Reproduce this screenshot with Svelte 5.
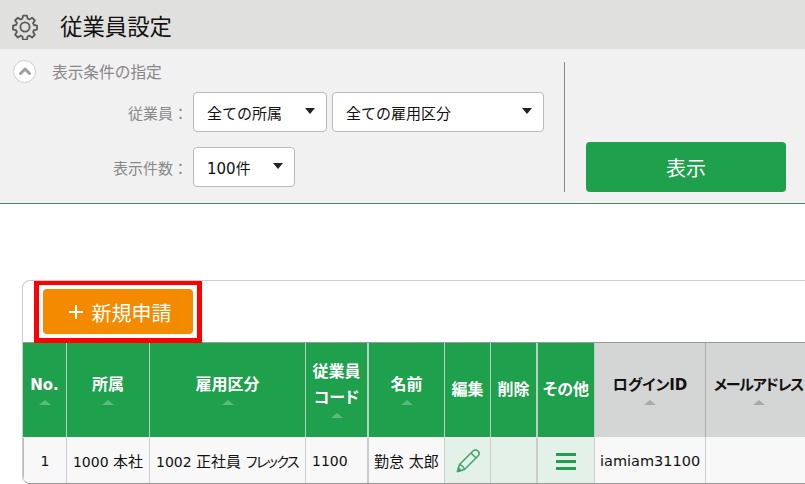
<script>
  const heads = [
    { label: 'No.', w: 44, sort: true },
    { label: '所属', w: 83, sort: true },
    { label: '雇用区分', w: 156, sort: true },
    { label: ['従業員', 'コード'], w: 63, sort: true, thick: true },
    { label: '名前', w: 76, sort: true },
    { label: '編集', w: 46 },
    { label: '削除', w: 47, thick: true },
    { label: 'その他', w: 57 },
    { label: 'ログインID', w: 111, sort: true, grey: true },
    { label: 'メールアドレス', w: 106, sort: true, grey: true, tight: true }
  ];
</script>

<div class="page">
  <header class="title">
    <svg class="gear" width="26" height="26" viewBox="0 0 26 26" fill="none" stroke="#5a5a5a" stroke-width="1.800" stroke-linejoin="round">
      <path d="M11 1.600h4l.6 3.100 1.900.8 2.600-1.800 2.800 2.800-1.800 2.600.8 1.900 3.100.6v4l-3.100.6-.8 1.900 1.800 2.600-2.800 2.800-2.600-1.800-1.900.8-.6 3.100h-4l-.6-3.100-1.900-.8-2.600 1.800-2.800-2.800 1.800-2.600-.8-1.900-3.100-.6v-4l3.100-.6.8-1.900-1.800-2.600 2.800-2.800 2.600 1.800 1.900-.8z"/>
      <circle cx="13" cy="13" r="4.600"/>
    </svg>
    <h1>従業員設定</h1>
  </header>

  <section class="filter">
    <div class="conditions">
      <div class="cond-title">
        <span class="toggle">
          <svg width="14" height="10" viewBox="0 0 14 10" fill="none" stroke="#a0a0a0" stroke-width="3" stroke-linecap="round" stroke-linejoin="round"><path d="M2.500 7.500 7 3l4.500 4.500"/></svg>
        </span>
        <span>表示条件の指定</span>
      </div>
      <div class="row first">
        <span class="label">従業員：</span>
        <div class="select s1"><span>全ての所属</span><i></i></div>
        <div class="select s2"><span>全ての雇用区分</span><i></i></div>
      </div>
      <div class="row second">
        <span class="label">表示件数：</span>
        <div class="select s3"><span>100件</span><i></i></div>
      </div>
    </div>
    <div class="action">
      <button class="show">表示</button>
    </div>
  </section>

  <section class="card">
    <div class="toolbar">
      <div class="highlight">
        <button class="new">
          <svg width="14" height="14" viewBox="0 0 14 14" fill="#fff"><rect x="6" y="0" width="2" height="14"/><rect x="0" y="6" width="14" height="2"/></svg>
          <span>新規申請</span>
        </button>
      </div>
    </div>
    <table>
      <colgroup>
        {#each heads as h}<col style="width:{h.w}px" />{/each}
      </colgroup>
      <thead>
        <tr>
          {#each heads as h}
            <th class:grey={h.grey} class:thick={h.thick} class:tight={h.tight}>
              {#if Array.isArray(h.label)}
                {#each h.label as l}<div>{l}</div>{/each}
              {:else}
                <div>{h.label}</div>
              {/if}
              {#if h.sort}<b class="arrow"></b>{/if}
            </th>
          {/each}
        </tr>
      </thead>
      <tbody>
        <tr>
          <td class="c">1</td>
          <td class="c">1000 <span class="cjk">本社</span></td>
          <td>1002 <span class="cjk">正社員 <span class="narrow">フレックス</span></span></td>
          <td class="thick">1100</td>
          <td class="cjk name">勤怠 太郎</td>
          <td class="op">
            <svg width="26" height="26" viewBox="0 0 26 26" fill="none" stroke="#45a868" stroke-width="1.600" stroke-linejoin="round"><path d="M2.500 23.500l2-7L18 3c1.500-1.500 3.500-1.500 5 0s1.500 3.500 0 5L9.500 21.500z"/><path d="M4.500 16.500c2 .3 4.500 2.800 5 5M16 5l5 5"/><path d="M2.500 23.500l1-3.500 2.500 2.500z" fill="#45a868"/></svg>
          </td>
          <td class="op thick"></td>
          <td class="op"><span class="menu"><i></i><i></i><i></i></span></td>
          <td class="id">iamiam31100</td>
          <td></td>
        </tr>
      </tbody>
    </table>
  </section>
</div>

<style>
  :global(body) { margin: 0; background: #fff; }
  .page {
    width: 805px; height: 484px; overflow: hidden; background: #fff;
    font-family: "DejaVu Sans", "Noto Sans CJK JP", sans-serif; color: #111;
  }
  .title { height: 49px; background: #e0e0de; display: flex; align-items: center; padding: 5px 0 0 12px; box-sizing: border-box; }
  .gear { flex: none; }
  h1 { margin: 0 0 0 22px; font-size: 22.400px; font-weight: 400; color: #111; line-height: 1; }
  .filter { height: 155px; box-sizing: border-box; background: #f1f1f1; border-bottom: 1px solid #3d8f5b; display: flex; padding-top: 13px; }
  .conditions { width: 551px; height: 130px; border-right: 1px solid #888; padding-left: 13px; }
  .cond-title { display: flex; align-items: center; height: 20px; color: #888; font-size: 15.700px; margin-top: -1px; }
  .toggle { width: 23px; height: 23px; border-radius: 50%; background: #fff; border: 1px solid #ccc; display: flex; align-items: center; justify-content: center; margin-right: 16px; box-sizing: border-box; }
  .row { display: flex; align-items: center; }
  .row.first { margin-top: 11px; }
  .row.second { margin-top: 15px; }
  .label { width: 175px; margin-right: 5px; text-align: right; font-size: 15px; color: #888; white-space: nowrap; }
  .select { height: 40px; box-sizing: border-box; background: #fff; border: 1px solid #bbb; border-radius: 4px; display: flex; align-items: center; justify-content: space-between; font-size: 15px; color: #111; padding: 0 11px 0 13px; }
  .select i { width: 0; height: 0; border-left: 5px solid transparent; border-right: 5px solid transparent; border-top: 6px solid #222; margin-top: -3px; }
  .s1 { width: 134px; margin-right: 5px; }
  .s2 { width: 212px; }
  .s3 { width: 102px; }
  .action { display: flex; align-items: flex-end; padding-left: 21px; height: 130px; }
  .show { width: 200px; height: 50px; border: 0; border-radius: 4px; background: #1fa04c; color: #fff; font: inherit; font-size: 20px; padding: 0; }
  .card { margin: 76px 0 0 22px; width: 900px; height: 204px; box-sizing: border-box; border: 1px solid #ccc; border-bottom-color: #999; border-radius: 8px; overflow: hidden; background: #fff; }
  .toolbar { height: 62px; padding-left: 11px; box-sizing: border-box; border-bottom: 1px solid #999; }
  .highlight { width: 168px; height: 62px; box-sizing: border-box; border: 5px solid #f00; border-top-width: 4px; padding: 4px; background: #fff; }
  .new { width: 150px; height: 45px; border: 0; border-radius: 4px; background: #f38a00; color: #fff; font: inherit; font-size: 20px; padding: 1px 0 0 4px; display: flex; align-items: center; justify-content: center; gap: 9px; }
  table { border-collapse: separate; border-spacing: 0; table-layout: fixed; width: 789px; }
  th { height: 95px; box-sizing: border-box; background: #1fa04c; color: #fff; font-size: 16px; font-weight: 700; vertical-align: top; padding: 0; border-right: 1px solid #b9cfc0; border-bottom: 1px solid #f4f4f4; text-align: center; white-space: nowrap; overflow: hidden; font-feature-settings: "palt"; }
  th:first-child { font-size: 15px; }
  th > div { line-height: 26px; }
  th:nth-child(-n+3) { padding-top: 29px; }
  th:nth-child(4) { padding-top: 16px; }
  th:nth-child(5) { padding-top: 29px; }
  th:nth-child(6), th:nth-child(7), th:nth-child(8) { padding-top: 34px; }
  th:nth-child(n+9) { padding-top: 29px; }
  th.thick, td.thick { border-right-width: 2px; }
  th.grey { background: #d4d5d5; color: #111; border-right-color: #aaa; font-size: 15px; }
  th.tight { letter-spacing: -1.200px; }
  .arrow { display: block; width: 0; height: 0; margin: 2px auto 0; border-left: 6px solid transparent; border-right: 6px solid transparent; border-bottom: 5px solid #5cba7f; }
  .grey .arrow { border-bottom-color: #aaa; }
  td { height: 45px; box-sizing: border-box; background: #f8f8f8; font-size: 14px; color: #111; padding: 0 0 0 6px; border-right: 1px solid #ccc; white-space: nowrap; overflow: hidden; }
  td:first-child { border-left: 1px solid #bbb; }
  .cjk { font-size: 15px; font-feature-settings: "palt"; }
  .narrow { letter-spacing: -1.500px; font-size: 14px; }
  td.name { padding-left: 5px; }
  td.c { text-align: center; padding: 0; }
  td.id { font-size: 14.500px; padding-left: 5px; }
  td.op { background: #e3f1e9; text-align: center; padding: 0; line-height: 0; }
  .menu { display: inline-flex; flex-direction: column; gap: 4px; }
  .menu i { display: block; width: 20px; height: 3px; background: #1fa04c; }
</style>
